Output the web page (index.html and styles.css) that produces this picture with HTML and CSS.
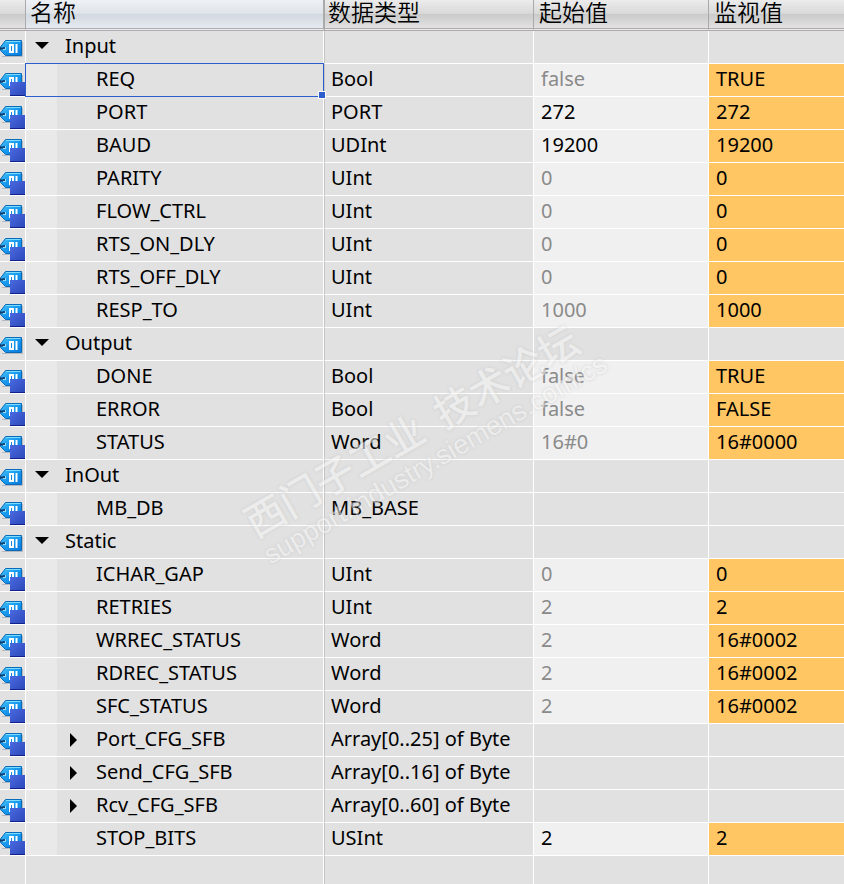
FILE: index.html
```
<!DOCTYPE html>
<html lang="zh-CN">
<head>
<meta charset="utf-8">
<title>MB_COMM_LOAD_DB</title>
<link rel="stylesheet" href="styles.css">
</head>
<body>
<svg class="defs" aria-hidden="true">
  <defs>
    <linearGradient id="blue" x1="0" y1="0" x2="1" y2="1">
      <stop offset="0" stop-color="#4cc4f8"/>
      <stop offset="0.45" stop-color="#1a9cf0"/>
      <stop offset="1" stop-color="#0a78dc"/>
    </linearGradient>
    <linearGradient id="navy" x1="0" y1="0" x2="1" y2="1">
      <stop offset="0" stop-color="#4a6ae0"/>
      <stop offset="1" stop-color="#2c48b8"/>
    </linearGradient>
    <symbol id="tag" viewBox="0 0 25 32">
      <path d="M2 25.500H22.500V11" fill="none" stroke="#b4b8c0" stroke-width="1"/>
      <path d="M0.500 16L5.500 9.500H21.500V24.500H5.500L0.500 19.500Z" fill="url(#blue)" stroke="#0a6cb8"/>
      <path d="M6 10.500H20.500" stroke="#7cdcff"/>
      <path d="M0 17.500H3" stroke="#123c6c" stroke-width="2"/>
      <rect x="3" y="16" width="3" height="3" fill="#9cd8f8"/>
      <rect x="3" y="16" width="2" height="2" fill="#0c4c88"/>
      <rect x="10" y="14" width="3" height="7" fill="#1688e0" stroke="#fff" stroke-width="2"/>
      <path d="M16.500 13V22" stroke="#fff" stroke-width="2"/>
    </symbol>
    <symbol id="tag-member" viewBox="0 0 25 32">
      <use href="#tag" width="25" height="32"/>
      <rect x="10" y="18" width="15" height="14" fill="url(#navy)"/>
      <rect x="10" y="31" width="15" height="1" fill="#10208c"/>
    </symbol>
    <symbol id="open" viewBox="0 0 14 14"><path d="M0 2H14L7 9Z"/></symbol>
    <symbol id="closed" viewBox="0 0 14 14"><path d="M4 0L11 7L4 14Z"/></symbol>
  </defs>
</svg>

<main class="editor">
<table class="grid">
  <colgroup><col class="c-icon"><col class="c-name"><col class="c-type"><col class="c-start"><col></colgroup>
  <thead>
    <tr><th aria-label="图标"></th><th class="sorted" scope="col">名称</th><th scope="col">数据类型</th><th scope="col">起始值</th><th scope="col">监视值</th></tr>
  </thead>
  <tbody>
    <tr class="group"><td><svg class="icon"><use href="#tag"/></svg></td><td class="name"><button class="toggle" aria-label="Input" aria-expanded="true"><svg><use href="#open"/></svg></button>Input</td><td></td><td></td><td></td></tr>
    <tr><td><svg class="icon"><use href="#tag-member"/></svg></td><td class="name selected">REQ</td><td>Bool</td><td class="start default">false</td><td class="live">TRUE</td></tr>
    <tr><td><svg class="icon"><use href="#tag-member"/></svg></td><td class="name">PORT</td><td>PORT</td><td class="start">272</td><td class="live">272</td></tr>
    <tr><td><svg class="icon"><use href="#tag-member"/></svg></td><td class="name">BAUD</td><td>UDInt</td><td class="start">19200</td><td class="live">19200</td></tr>
    <tr><td><svg class="icon"><use href="#tag-member"/></svg></td><td class="name">PARITY</td><td>UInt</td><td class="start default">0</td><td class="live">0</td></tr>
    <tr><td><svg class="icon"><use href="#tag-member"/></svg></td><td class="name">FLOW_CTRL</td><td>UInt</td><td class="start default">0</td><td class="live">0</td></tr>
    <tr><td><svg class="icon"><use href="#tag-member"/></svg></td><td class="name">RTS_ON_DLY</td><td>UInt</td><td class="start default">0</td><td class="live">0</td></tr>
    <tr><td><svg class="icon"><use href="#tag-member"/></svg></td><td class="name">RTS_OFF_DLY</td><td>UInt</td><td class="start default">0</td><td class="live">0</td></tr>
    <tr><td><svg class="icon"><use href="#tag-member"/></svg></td><td class="name">RESP_TO</td><td>UInt</td><td class="start default">1000</td><td class="live">1000</td></tr>
    <tr class="group"><td><svg class="icon"><use href="#tag"/></svg></td><td class="name"><button class="toggle" aria-label="Output" aria-expanded="true"><svg><use href="#open"/></svg></button>Output</td><td></td><td></td><td></td></tr>
    <tr><td><svg class="icon"><use href="#tag-member"/></svg></td><td class="name">DONE</td><td>Bool</td><td class="start default">false</td><td class="live">TRUE</td></tr>
    <tr><td><svg class="icon"><use href="#tag-member"/></svg></td><td class="name">ERROR</td><td>Bool</td><td class="start default">false</td><td class="live">FALSE</td></tr>
    <tr><td><svg class="icon"><use href="#tag-member"/></svg></td><td class="name">STATUS</td><td>Word</td><td class="start default">16#0</td><td class="live">16#0000</td></tr>
    <tr class="group"><td><svg class="icon"><use href="#tag"/></svg></td><td class="name"><button class="toggle" aria-label="InOut" aria-expanded="true"><svg><use href="#open"/></svg></button>InOut</td><td></td><td></td><td></td></tr>
    <tr><td><svg class="icon"><use href="#tag-member"/></svg></td><td class="name">MB_DB</td><td>MB_BASE</td><td></td><td></td></tr>
    <tr class="group"><td><svg class="icon"><use href="#tag"/></svg></td><td class="name"><button class="toggle" aria-label="Static" aria-expanded="true"><svg><use href="#open"/></svg></button>Static</td><td></td><td></td><td></td></tr>
    <tr><td><svg class="icon"><use href="#tag-member"/></svg></td><td class="name">ICHAR_GAP</td><td>UInt</td><td class="start default">0</td><td class="live">0</td></tr>
    <tr><td><svg class="icon"><use href="#tag-member"/></svg></td><td class="name">RETRIES</td><td>UInt</td><td class="start default">2</td><td class="live">2</td></tr>
    <tr><td><svg class="icon"><use href="#tag-member"/></svg></td><td class="name">WRREC_STATUS</td><td>Word</td><td class="start default">2</td><td class="live">16#0002</td></tr>
    <tr><td><svg class="icon"><use href="#tag-member"/></svg></td><td class="name">RDREC_STATUS</td><td>Word</td><td class="start default">2</td><td class="live">16#0002</td></tr>
    <tr><td><svg class="icon"><use href="#tag-member"/></svg></td><td class="name">SFC_STATUS</td><td>Word</td><td class="start default">2</td><td class="live">16#0002</td></tr>
    <tr class="branch"><td><svg class="icon"><use href="#tag-member"/></svg></td><td class="name"><button class="toggle" aria-label="Port_CFG_SFB" aria-expanded="false"><svg><use href="#closed"/></svg></button>Port_CFG_SFB</td><td>Array[0..25] of Byte</td><td></td><td></td></tr>
    <tr class="branch"><td><svg class="icon"><use href="#tag-member"/></svg></td><td class="name"><button class="toggle" aria-label="Send_CFG_SFB" aria-expanded="false"><svg><use href="#closed"/></svg></button>Send_CFG_SFB</td><td>Array[0..16] of Byte</td><td></td><td></td></tr>
    <tr class="branch"><td><svg class="icon"><use href="#tag-member"/></svg></td><td class="name"><button class="toggle" aria-label="Rcv_CFG_SFB" aria-expanded="false"><svg><use href="#closed"/></svg></button>Rcv_CFG_SFB</td><td>Array[0..60] of Byte</td><td></td><td></td></tr>
    <tr><td><svg class="icon"><use href="#tag-member"/></svg></td><td class="name">STOP_BITS</td><td>USInt</td><td class="start">2</td><td class="live">2</td></tr>
    <tr class="rest"><td></td><td class="name"></td><td></td><td></td><td></td></tr>
  </tbody>
</table>
<div class="watermark">
  <span class="wm-title">西门子工业&nbsp; 技术论坛</span>
  <span class="wm-url">support.industry.siemens.com/cs</span>
</div>
</main>
</body>
</html>
```
FILE: styles.css
```
* { box-sizing: border-box; }

html, body { height: 100%; }

body {
  margin: 0;
  background: #e1e1e1;
  color: #000;
  font: 400 20px/30px "Noto Sans", "Noto Sans CJK SC", sans-serif;
}

.defs { position: absolute; width: 0; height: 0; }

.editor {
  position: relative;
  min-height: 100%;
  height: 100%;
  overflow: hidden;
}

.grid {
  width: 100%;
  height: 100%;
  table-layout: fixed;
  border-collapse: separate;
  border-spacing: 0;
}

.c-icon { width: 26px; }
.c-name { width: 299px; }
.c-type { width: 209px; }
.c-start { width: 175px; }

th {
  height: 31px;
  padding: 0 0 4px 5px;
  text-align: left;
  vertical-align: top;
  white-space: nowrap;
  font: 350 23px/23px "Noto Sans CJK SC", sans-serif;
  background: linear-gradient(#ececec, #d9d9d9 48%, #cacaca 50%, #e2e2e2);
  border-right: 1px solid #aaa;
  border-bottom: 3px double #aeaaae;
}

th:nth-child(3) { padding-left: 3px; }

th.sorted {
  padding-left: 4px;
  background: linear-gradient(#eef1f5, #dfe4ea 48%, #d2d8e0 50%, #e6eaf0);
  border-right-width: 2px;
}

th:last-child { border-right: 0; }

td {
  height: 33px;
  padding: 0 0 2px 6px;
  vertical-align: middle;
  white-space: nowrap;
  border-right: 1px solid #fff;
  border-bottom: 1px solid #fff;
}

td:first-child { padding: 0; }
td:nth-child(4), td:last-child { padding-left: 7px; }
td:last-child { border-right: 0; }

.icon { display: block; width: 25px; height: 32px; }

td.name {
  padding-left: 70px;
  background: linear-gradient(#e9e9e9, #e9e9e9) 0 0 / 31px 100% no-repeat;
  border-right: 1px solid #c4c4c4;
  box-shadow: inset -1px 0 #fff;
}

.group .name { padding-left: 9px; background: none; }
.branch .name { padding-left: 40px; }
.rest .name { background: none; }

.toggle {
  width: 14px;
  height: 16px;
  margin: 0 16px 0 0;
  padding: 0 0 2px;
  border: 0;
  background: none;
  vertical-align: middle;
}

.toggle svg { display: block; width: 14px; height: 14px; }

.start { background: #f0f0f0; }
.default { color: #8a8a8a; }
.live { background: #ffc663; }

.selected { position: relative; }

.selected::before {
  content: "";
  position: absolute;
  inset: -1px 0 -1px -1px;
  border: 1px solid #2c5ed0;
}

.selected::after {
  content: "";
  position: absolute;
  right: -2px;
  bottom: -3px;
  width: 6px;
  height: 6px;
  background: #2c5ed0;
  border: 1px solid #fff;
}

.rest td { height: auto; border-bottom: 0; }

/* Diagonal site mark laid over the grid */
.watermark {
  position: absolute;
  left: 255px;
  top: 538px;
  transform: rotate(-30deg);
  transform-origin: 0 0;
  white-space: nowrap;
  color: #f6f6f6;
  text-shadow: 0 0 3px #b8b8b8;
  opacity: 0.55;
  pointer-events: none;
}

.wm-title, .wm-url { position: absolute; left: 0; }
.wm-title { bottom: -8px; font: 500 40px/48px "Noto Sans CJK SC", sans-serif; }
.wm-url { top: 0; font: 400 27px/44px "Liberation Sans", sans-serif; }
```
